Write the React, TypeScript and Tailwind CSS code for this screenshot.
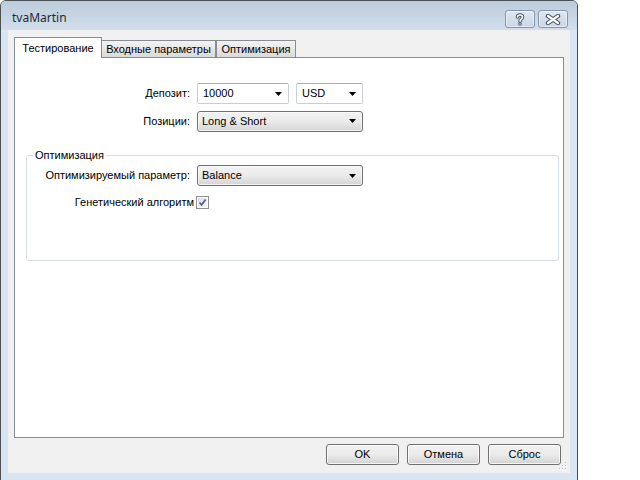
import React from "react";

const font = "font-['Liberation_Sans',_Arial,_sans-serif]";

function ComboArrow() {
  return (
    <svg width="7" height="4" viewBox="0 0 7 4" className="shrink-0">
      <polygon points="0,0 7,0 3.5,4" fill="#000" />
    </svg>
  );
}

function EditCombo({ value, width }: { value: string; width: string }) {
  return (
    <div
      className={`${width} h-[21px] flex items-center justify-between pl-[5px] pr-[6px] bg-white border border-[#c9ced6] border-t-[#abadb3] rounded-[2px]`}
    >
      <span className="text-[11px] text-black leading-none">{value}</span>
      <ComboArrow />
    </div>
  );
}

function ListCombo({ value }: { value: string }) {
  return (
    <div className="w-[166px] h-[21px] flex items-center justify-between pl-[4px] pr-[6px] rounded-[3px] border border-[#707070] bg-gradient-to-b from-[#f2f2f2] via-[#ebebeb] to-[#d4d4d4] shadow-[inset_0_0_0_1px_rgba(255,255,255,0.7)]">
      <span className="text-[11px] text-black leading-none">{value}</span>
      <ComboArrow />
    </div>
  );
}

function DialogButton({ label }: { label: string }) {
  return (
    <div className="w-[73px] h-[21px] flex items-center justify-center rounded-[3px] border border-[#707070] bg-gradient-to-b from-[#f2f2f2] via-[#ebebeb] to-[#d2d2d2] shadow-[inset_0_0_0_1px_rgba(255,255,255,0.75)]">
      <span className="text-[11px] text-black leading-none">{label}</span>
    </div>
  );
}

function CaptionButton({ children, width }: { children: React.ReactNode; width: string }) {
  return (
    <div
      className={`${width} h-[18px] flex items-center justify-center rounded-[3px] border border-[#8797ab] bg-gradient-to-b from-[#dfe7f0] to-[#c9d6e5] shadow-[inset_0_0_0_1px_rgba(255,255,255,0.45)]`}
    >
      {children}
    </div>
  );
}

function HelpGlyph() {
  return (
    <svg width="10" height="13" viewBox="0 0 10 13">
      <path
        d="M2.5 4 C2.5 1.3 7.5 1.3 7.5 4 C7.5 6.2 5 6 5 8.3"
        fill="none"
        stroke="#4a5563"
        strokeWidth="3.6"
        strokeLinecap="round"
      />
      <circle cx="5" cy="11" r="1.8" fill="#4a5563" />
      <path
        d="M2.5 4 C2.5 1.3 7.5 1.3 7.5 4 C7.5 6.2 5 6 5 8.3"
        fill="none"
        stroke="#fff"
        strokeWidth="1.6"
        strokeLinecap="round"
      />
      <circle cx="5" cy="11" r="0.8" fill="#fff" />
    </svg>
  );
}

function CloseGlyph() {
  return (
    <svg width="16" height="11" viewBox="0 0 16 11">
      <path d="M3 2 L13 9 M13 2 L3 9" stroke="#4a5563" strokeWidth="4.4" strokeLinecap="round" />
      <path d="M3 2 L13 9 M13 2 L3 9" stroke="#fff" strokeWidth="2.2" strokeLinecap="round" />
    </svg>
  );
}

function Gripper() {
  const dots = [
    [6, 0],
    [3, 3],
    [6, 3],
    [0, 6],
    [3, 6],
    [6, 6],
  ];
  return (
    <svg width="8" height="8" viewBox="0 0 8 8" className="absolute right-[3px] bottom-[3px]">
      {dots.map(([x, y], i) => (
        <g key={i}>
          <rect x={x + 1} y={y + 1} width="1" height="1" fill="#fff" />
          <rect x={x} y={y} width="1" height="1" fill="#b8bcc2" />
        </g>
      ))}
    </svg>
  );
}

function Checkbox() {
  return (
    <div className="w-[13px] h-[13px] border border-[#8f8f8f] bg-white p-px">
      <div className="w-full h-full bg-gradient-to-br from-[#d9dde3] to-[#f7f7f7] flex items-center justify-center">
        <svg width="9" height="9" viewBox="0 0 9 9">
          <path d="M1.5 4.5 L3.6 6.8 L7.6 1.4" fill="none" stroke="#50628f" strokeWidth="1.7" />
        </svg>
      </div>
    </div>
  );
}

export default function App() {
  return (
    <div className={`w-[640px] h-[480px] bg-white overflow-hidden ${font}`}>
      <div className="w-[578px] h-[490px] rounded-t-[6px] border border-[#4b5056] bg-[#dae5f2] flex flex-col">
        {/* caption */}
        <div className="h-[29px] shrink-0 rounded-t-[5px] bg-gradient-to-b from-[#bccbdb] to-[#d2deeb] flex items-start">
          <span className="ml-[11px] mt-[11px] text-[12px] leading-none text-[#1d2a38] font-['Noto_Sans',_sans-serif]">
            tvaMartin
          </span>
          <div className="ml-auto mt-[9px] mr-[9px] flex gap-[3px]">
            <CaptionButton width="w-[30px]">
              <HelpGlyph />
            </CaptionButton>
            <CaptionButton width="w-[30px]">
              <CloseGlyph />
            </CaptionButton>
          </div>
        </div>

        {/* client area */}
        <div className="relative ml-[7px] w-[562px] h-[443px] bg-[#f0f0f0] pt-[7px] pl-[6px]">
          {/* tab strip */}
          <div className="flex items-end h-[20px] relative z-10">
            <div className="w-[88px] h-[21px] -mb-px bg-white border border-b-0 border-[#898c95] flex justify-center pt-[5px] z-10">
              <span className="text-[11px] leading-none text-black">Тестирование</span>
            </div>
            <div className="-ml-px w-[115px] h-[17px] bg-gradient-to-b from-[#f3f3f3] to-[#dadada] border border-b-0 border-[#898c95] flex justify-center pt-[3px]">
              <span className="text-[11px] leading-none text-black">Входные параметры</span>
            </div>
            <div className="w-[80px] h-[17px] bg-gradient-to-b from-[#f3f3f3] to-[#dadada] border border-b-0 border-[#898c95] flex justify-center pt-[3px]">
              <span className="text-[11px] leading-none text-black">Оптимизация</span>
            </div>
          </div>

          {/* tab page */}
          <div className="w-[550px] h-[381px] bg-white border border-[#898c95] pt-[25px]">
            <div className="flex items-center h-[21px]">
              <span className="w-[176px] text-right pr-px text-[11px] leading-none text-black">Депозит:</span>
              <div className="ml-[6px] flex gap-[7px]">
                <EditCombo value="10000" width="w-[92px]" />
                <EditCombo value="USD" width="w-[67px]" />
              </div>
            </div>
            <div className="flex items-center h-[22px] mt-[6px]">
              <span className="w-[176px] text-right pr-px text-[11px] leading-none text-black">Позиции:</span>
              <div className="ml-[6px]">
                <ListCombo value="Long & Short" />
              </div>
            </div>

            {/* group box */}
            <div className="relative ml-[11px] mt-[23px] w-[533px] h-[106px] border border-[#d5dfe5] rounded-[3px] pt-[9px]">
              <span className="absolute left-[6px] -top-[8px] bg-white px-[2px] text-[11px] leading-[14px] text-black">
                Оптимизация
              </span>
              <div className="flex items-center h-[21px]">
                <span className="w-[164px] text-right pr-px text-[11px] leading-none text-black">
                  Оптимизируемый параметр:
                </span>
                <div className="ml-[6px]">
                  <ListCombo value="Balance" />
                </div>
              </div>
              <div className="flex items-center mt-[9px] h-[14px]">
                <span className="w-[167px] text-right text-[11px] leading-none text-black">Генетический алгоритм</span>
                <div className="ml-[2px]">
                  <Checkbox />
                </div>
              </div>
            </div>
          </div>

          {/* dialog buttons */}
          <div className="flex justify-end gap-[8px] mt-[6px] pr-[9px]">
            <DialogButton label="OK" />
            <DialogButton label="Отмена" />
            <DialogButton label="Сброс" />
          </div>
          <Gripper />
        </div>
      </div>
    </div>
  );
}
